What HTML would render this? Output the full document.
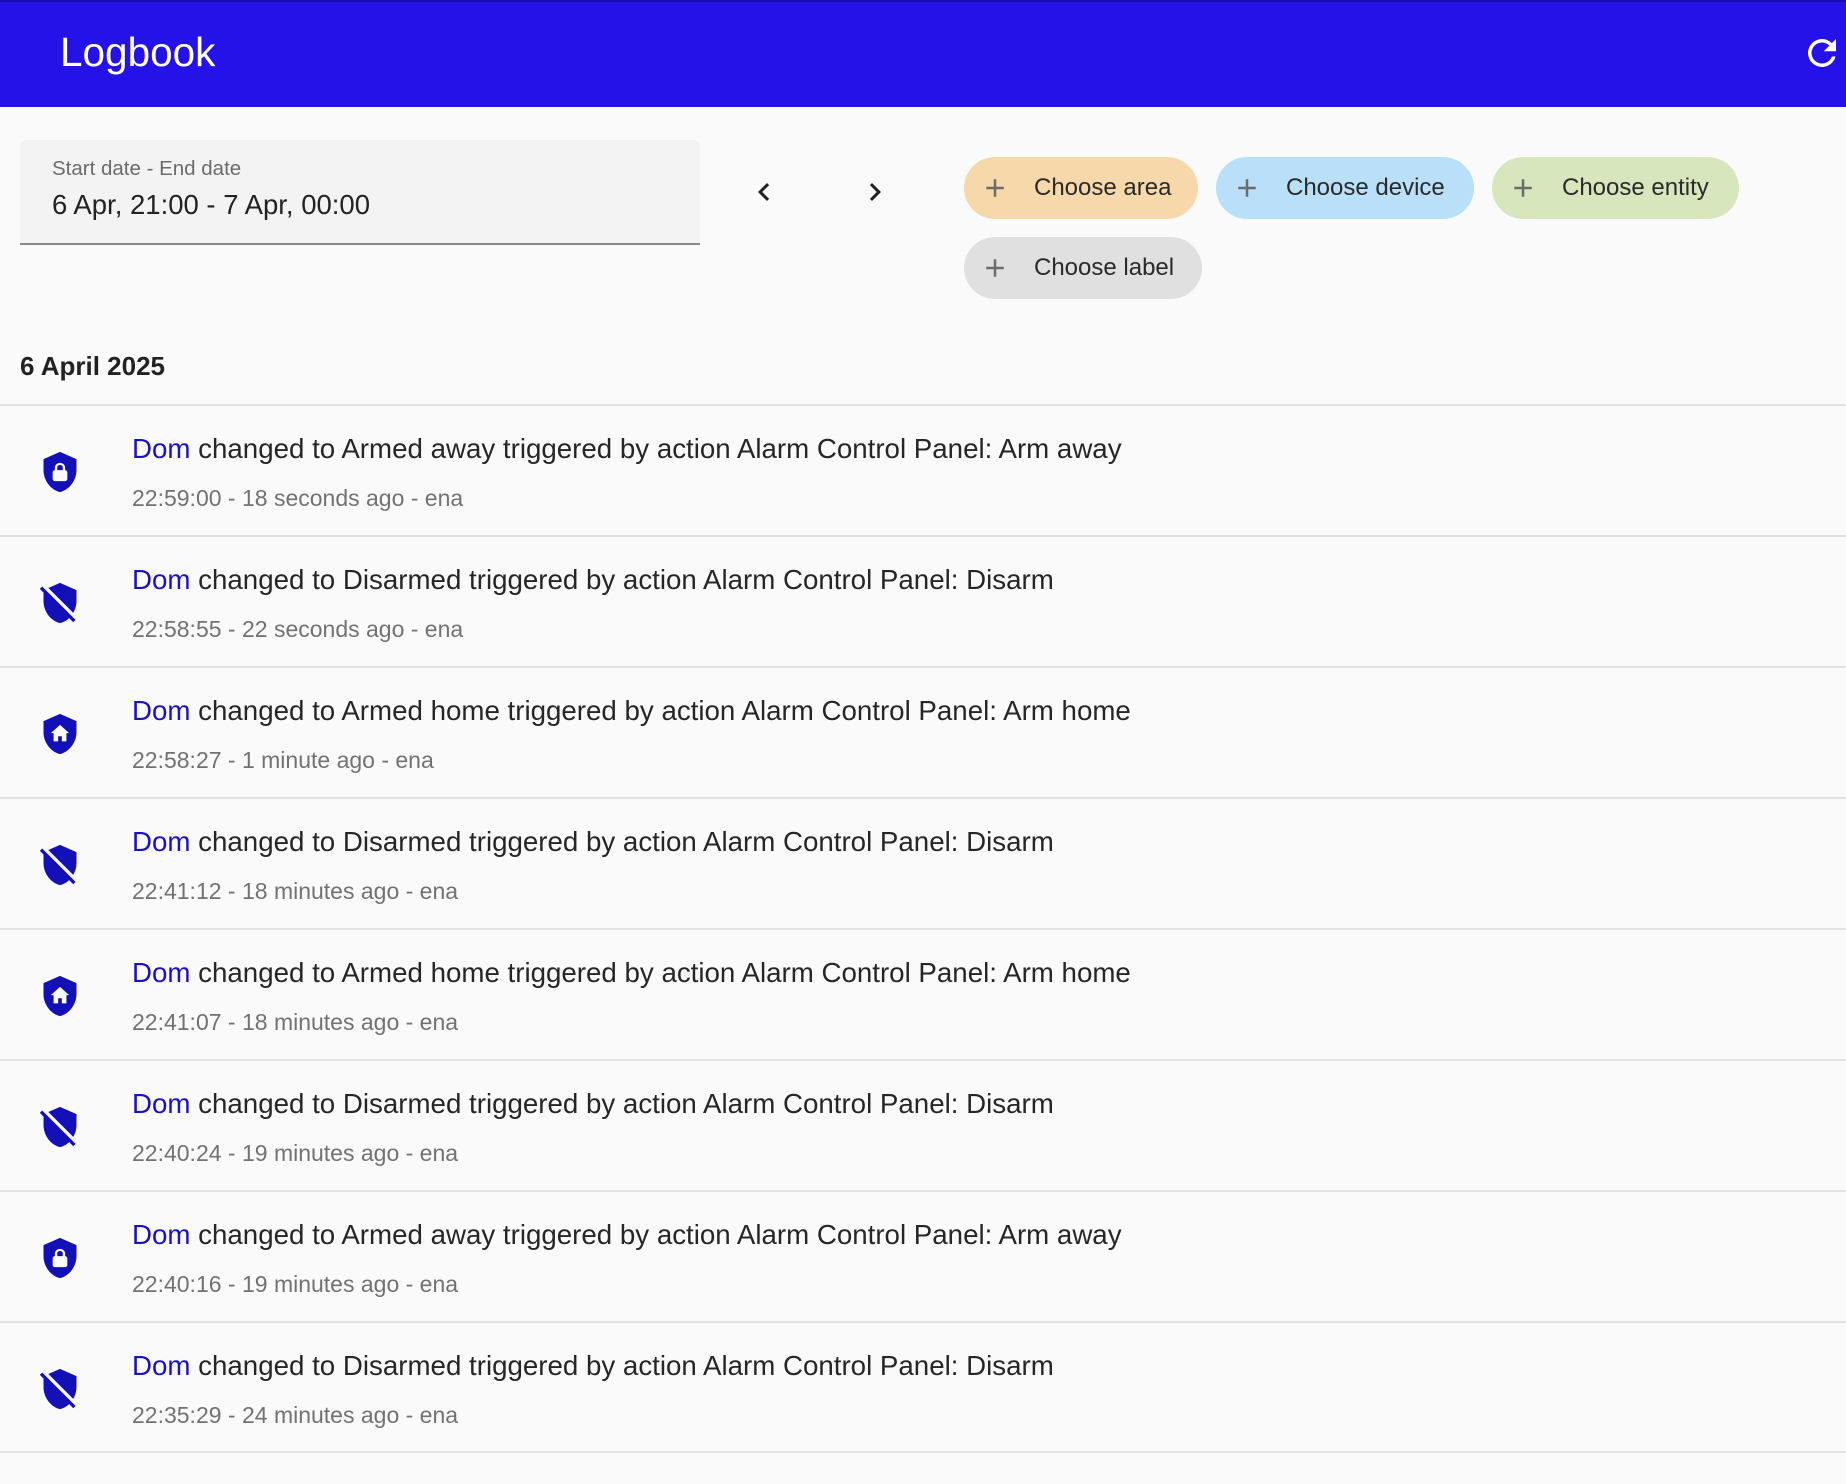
<!DOCTYPE html>
<html><head><meta charset="utf-8"><style>
*{margin:0;padding:0;box-sizing:border-box}
body{width:1846px;height:1484px;background:#fafafa;font-family:"Liberation Sans",Arial,sans-serif;position:relative;overflow:hidden;color:#212121}
.hdr{position:absolute;left:0;top:0;width:1846px;height:107px;background:#2412e8;border-top:2px solid #1a0cb0}
.title{position:absolute;left:60px;top:27px;font-size:40.5px;color:#fff}
.ref{position:absolute;left:1801px;top:30px;width:42px;height:42px}
.df{position:absolute;left:20px;top:140px;width:680px;height:105px;background:#f3f3f3;border-radius:6px 6px 0 0;border-bottom:2px solid #8a8a8a}
.df .l{position:absolute;left:32px;top:17px;font-size:20.5px;color:#6b6b6b}
.df .v{position:absolute;left:32px;top:49px;font-size:27.5px;color:#222}
.arr{position:absolute;top:174px;width:36px;height:36px}
.chip{position:absolute;height:62px;border-radius:31px;font-size:24px;color:#2a2a2a;line-height:62px;padding-left:70px}
.chip svg{position:absolute;left:16px;top:16px;width:30px;height:30px}
.dh{position:absolute;left:20px;top:351px;font-size:26px;font-weight:bold;color:#222}
.row{position:absolute;left:0;width:1846px;height:131px;border-top:2px solid #e2e2e2}
.row svg{position:absolute;left:38px;top:44px;width:44px;height:44px}
.row .m{position:absolute;left:132px;top:27px;font-size:27.7px;color:#262626;white-space:nowrap}
.row .m b{font-weight:normal;color:#1a10c4}
.row .s{position:absolute;left:132px;top:79px;font-size:23px;color:#727272;white-space:nowrap}
.end{position:absolute;left:0;top:1451px;width:1846px;height:2px;background:#e2e2e2}
</style></head><body>
<div class="hdr"><div class="title">Logbook</div>
<svg class="ref" viewBox="0 0 24 24"><path fill="#fff" d="M17.65,6.35C16.2,4.9 14.21,4 12,4A8,8 0 0,0 4,12A8,8 0 0,0 12,20C15.73,20 18.84,17.45 19.73,14H17.65C16.83,16.33 14.61,18 12,18A6,6 0 0,1 6,12A6,6 0 0,1 12,6C13.66,6 15.140,6.69 16.22,7.78L13,11H20V4L17.65,6.35Z"/></svg></div>
<div class="df"><div class="l">Start date - End date</div><div class="v">6 Apr, 21:00 - 7 Apr, 00:00</div></div>
<svg class="arr" style="left:746px" viewBox="0 0 24 24"><path fill="#222" d="M15.41,16.58L10.83,12L15.41,7.41L14,6L8,12L14,18L15.41,16.58Z"/></svg>
<svg class="arr" style="left:857px" viewBox="0 0 24 24"><path fill="#222" d="M8.59,16.58L13.17,12L8.59,7.41L10,6L16,12L10,18L8.59,16.58Z"/></svg>
<div class="chip" style="left:964px;top:157px;width:234px;background:#f7d8ab"><svg viewBox="0 0 24 24"><path fill="#6b6b6b" d="M19,13H13V19H11V13H5V11H11V5H13V11H19V13Z"/></svg>Choose area</div>
<div class="chip" style="left:1216px;top:157px;width:258px;background:#b9e0f8"><svg viewBox="0 0 24 24"><path fill="#6b6b6b" d="M19,13H13V19H11V13H5V11H11V5H13V11H19V13Z"/></svg>Choose device</div>
<div class="chip" style="left:1492px;top:157px;width:247px;background:#d8e6bd"><svg viewBox="0 0 24 24"><path fill="#6b6b6b" d="M19,13H13V19H11V13H5V11H11V5H13V11H19V13Z"/></svg>Choose entity</div>
<div class="chip" style="left:964px;top:237px;width:238px;background:#e0e0e0"><svg viewBox="0 0 24 24"><path fill="#6b6b6b" d="M19,13H13V19H11V13H5V11H11V5H13V11H19V13Z"/></svg>Choose label</div>
<div class="dh">6 April 2025</div>

<svg width="0" height="0" style="position:absolute"><defs>
<path id="lock" fill="#1410b8" fill-rule="evenodd" d="M12,1L3,5V11C3,16.55 6.84,21.74 12,23C17.16,21.74 21,16.55 21,11V5L12,1M12,7C13.4,7 14.8,8.1 14.8,9.5V11C15.4,11 16,11.6 16,12.3V15.8C16,16.4 15.4,17 14.7,17H9.2C8.6,17 8,16.4 8,15.7V12.2C8,11.6 8.6,11 9.2,11V9.5C9.2,8.1 10.6,7 12,7M12,8.2C11.2,8.2 10.5,8.7 10.5,9.5V11H13.5V9.5C13.5,8.7 12.8,8.2 12,8.2Z"/>
<path id="off" fill="#1410b8" d="M1,4.27L2.28,3L20.5,21.22L19.23,22.5L17,20.25C15.57,21.57 13.870,22.54 12,23C6.84,21.74 3,16.55 3,11V6.27L1,4.27M12,1L21,5V11C21,13.28 20.35,15.5 19.23,17.41L5.65,3.82L12,1Z"/>
<path id="home" fill="#1410b8" fill-rule="evenodd" d="M12,1L3,5V11C3,16.5 6.8,21.7 12,23C17.2,21.7 21,16.5 21,11V5L12,1M12,7L17,11.5H15.5V16H13V13.2H11V16H8.5V11.5H7L12,7Z"/>
</defs></svg>

<div class="row" style="top:404px"><svg viewBox="0 0 24 24"><use href="#lock"/></svg><div class="m"><b>Dom</b> changed to Armed away triggered by action Alarm Control Panel: Arm away</div><div class="s">22:59:00 - 18 seconds ago - ena</div></div>
<div class="row" style="top:535px"><svg viewBox="0 0 24 24"><use href="#off"/></svg><div class="m"><b>Dom</b> changed to Disarmed triggered by action Alarm Control Panel: Disarm</div><div class="s">22:58:55 - 22 seconds ago - ena</div></div>
<div class="row" style="top:666px"><svg viewBox="0 0 24 24"><use href="#home"/></svg><div class="m"><b>Dom</b> changed to Armed home triggered by action Alarm Control Panel: Arm home</div><div class="s">22:58:27 - 1 minute ago - ena</div></div>
<div class="row" style="top:797px"><svg viewBox="0 0 24 24"><use href="#off"/></svg><div class="m"><b>Dom</b> changed to Disarmed triggered by action Alarm Control Panel: Disarm</div><div class="s">22:41:12 - 18 minutes ago - ena</div></div>
<div class="row" style="top:928px"><svg viewBox="0 0 24 24"><use href="#home"/></svg><div class="m"><b>Dom</b> changed to Armed home triggered by action Alarm Control Panel: Arm home</div><div class="s">22:41:07 - 18 minutes ago - ena</div></div>
<div class="row" style="top:1059px"><svg viewBox="0 0 24 24"><use href="#off"/></svg><div class="m"><b>Dom</b> changed to Disarmed triggered by action Alarm Control Panel: Disarm</div><div class="s">22:40:24 - 19 minutes ago - ena</div></div>
<div class="row" style="top:1190px"><svg viewBox="0 0 24 24"><use href="#lock"/></svg><div class="m"><b>Dom</b> changed to Armed away triggered by action Alarm Control Panel: Arm away</div><div class="s">22:40:16 - 19 minutes ago - ena</div></div>
<div class="row" style="top:1321px"><svg viewBox="0 0 24 24"><use href="#off"/></svg><div class="m"><b>Dom</b> changed to Disarmed triggered by action Alarm Control Panel: Disarm</div><div class="s">22:35:29 - 24 minutes ago - ena</div></div>
<div class="end"></div>
</body></html>
